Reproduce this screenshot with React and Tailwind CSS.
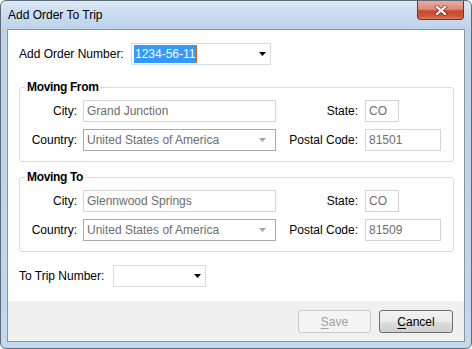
const Arrow = ({ gray }) => (
  <svg width="7" height="4" viewBox="0 0 7 4" className="shrink-0">
    <polygon points="0,0 7,0 3.5,4" fill={gray ? "#a3a3a3" : "#000"} />
  </svg>
);

const TextBox = ({ value, width }) => (
  <div
    className={`${width} h-[22px] border border-[#d5d5d5] bg-white px-[3px] flex items-center text-[#6d6d6d]`}
  >
    {value}
  </div>
);

const Row = ({ label, field, label2, field2 }) => (
  <div className="flex items-center">
    <div className="w-[57px] text-right">{label}</div>
    <div className="ml-[6px]">{field}</div>
    <div className="w-[82px] text-right">{label2}</div>
    <div className="ml-[7px]">{field2}</div>
  </div>
);

const Group = ({ title, city, state, postal }) => (
  <div className="relative mx-[11px] mr-[10px] h-[75px] rounded-[3px] border border-[#d5dde3] pt-[12px]">
    <span className="absolute left-[5px] top-[-8px] bg-white px-[2px] font-bold tracking-[-0.35px] leading-[14px]">
      {title}
    </span>
    <div className="flex flex-col gap-[7px]">
      <Row
        label="City:"
        field={<TextBox value={city} width="w-[193px]" />}
        label2="State:"
        field2={<TextBox value={state} width="w-[34px]" />}
      />
      <Row
        label="Country:"
        field={
          <div className="w-[193px] h-[22px] border border-[#a9a9a9] bg-white pl-[3px] pr-[9px] flex items-center justify-between text-[#6d6d6d]">
            <span>United States of America</span>
            <Arrow gray />
          </div>
        }
        label2="Postal Code:"
        field2={<TextBox value={postal} width="w-[76px]" />}
      />
    </div>
  </div>
);

export default function App() {
  return (
    <div className="w-[472px] h-[349px] rounded-[6px] border border-[#5d6b79] bg-[linear-gradient(to_bottom,#dbe8f5_0px,#c9dcf0_14px,#bdd3ea_29px,#c3d7ed_100%)] px-[6px] pb-[6px] font-['Liberation_Sans',Arial,sans-serif] text-[12px] leading-[14px] text-black">
      <div className="h-[28px] flex items-start justify-between">
        <div className="ml-[1px] mt-[7px]">Add Order To Trip</div>
        <div className="mr-[1px] w-[47px] h-[19px] rounded-b-[4px] border border-t-0 border-[#7a2e20] bg-[linear-gradient(to_bottom,#e9ab9d_0%,#dd8c7a_45%,#c84a30_55%,#cf573b_85%,#dc7a5c_100%)] flex items-center justify-center">
          <svg width="14" height="11" viewBox="0 0 14 11">
            <path d="M3 2 L11 9 M11 2 L3 9" stroke="#5a1c12" strokeWidth="4" strokeLinecap="square" opacity="0.55" />
            <path d="M3 2 L11 9 M11 2 L3 9" stroke="#fff" strokeWidth="2.2" strokeLinecap="square" />
          </svg>
        </div>
      </div>
      <div className="h-[313px] border border-[#8796a6] bg-white flex flex-col">
        <div className="h-[271px] pt-[13px]">
          <div className="flex items-center pl-[11px]">
            <div className="w-[112px]">Add Order Number:</div>
            <div className="w-[140px] h-[22px] border border-[#d8dde4] bg-white pl-[2px] pr-[4px] flex items-center justify-between">
              <div className="flex items-center">
                <span className="bg-[#3399ff] text-white h-[18px] flex items-center pl-[1px]">1234-56-11</span>
                <span className="w-[1px] h-[18px] bg-[#c8691f]" />
              </div>
              <Arrow />
            </div>
          </div>
          <div className="mt-[22px]">
            <Group title="Moving From" city="Grand Junction" state="CO" postal="81501" />
          </div>
          <div className="mt-[15px]">
            <Group title="Moving To" city="Glennwood Springs" state="CO" postal="81509" />
          </div>
          <div className="mt-[13px] flex items-center pl-[11px]">
            <div className="w-[94px]">To Trip Number:</div>
            <div className="w-[93px] h-[22px] border border-[#d8dde4] bg-white pr-[4px] flex items-center justify-end">
              <Arrow />
            </div>
          </div>
        </div>
        <div className="flex-1 bg-[#f0f0f0] pt-[9px] pr-[11px] flex justify-end items-start gap-[8px]">
          <button className="w-[73px] h-[23px] rounded-[3px] border border-[#c9c9c9] bg-[#f4f4f4] text-[#a0a0a0]">
            <span className="underline underline-offset-[2px]">S</span>ave
          </button>
          <button className="w-[74px] h-[23px] rounded-[3px] border border-[#707070] bg-[linear-gradient(to_bottom,#f2f2f2_0%,#ebebeb_50%,#dddddd_51%,#cfcfcf_100%)]">
            <span className="underline underline-offset-[2px]">C</span>ancel
          </button>
        </div>
      </div>
    </div>
  );
}
